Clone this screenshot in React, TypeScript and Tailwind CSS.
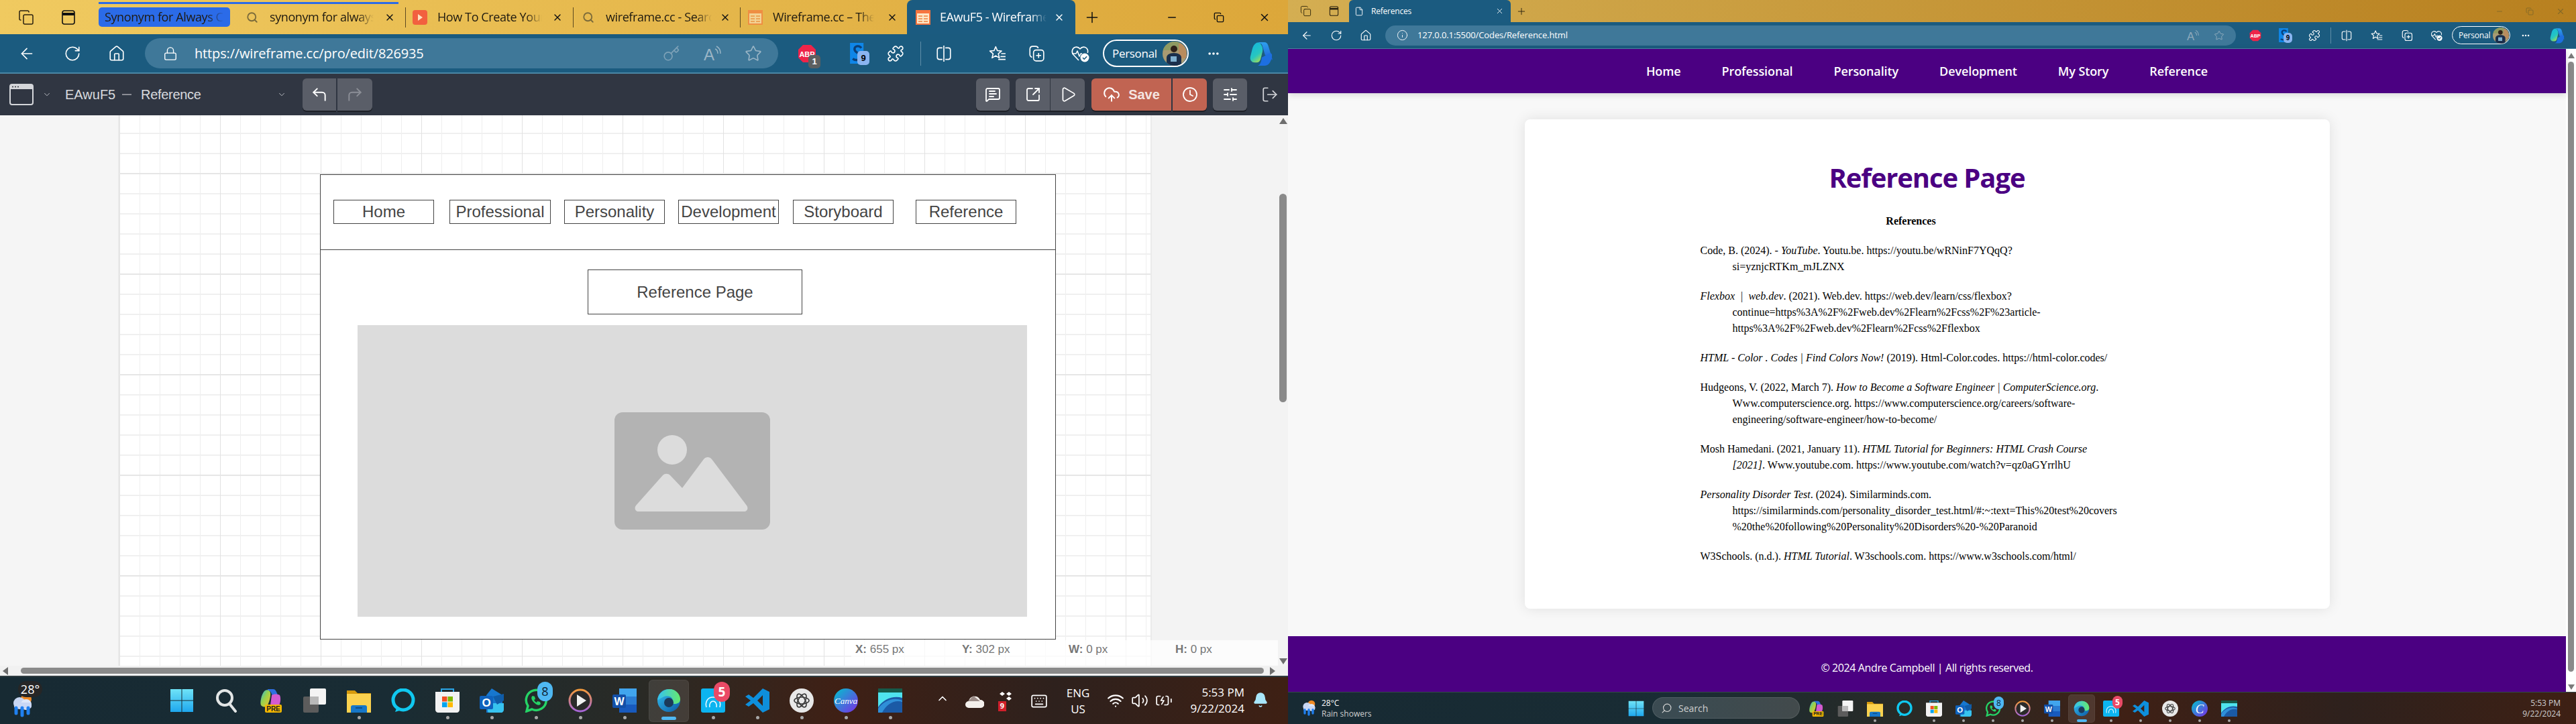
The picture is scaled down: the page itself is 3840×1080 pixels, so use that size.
import React from "react";
import {
  ArrowLeft, RotateCw, Home, Lock, Info, Star, Puzzle, Plus, X, Minus, Search,
  Wifi, Volume2, BatteryCharging, Bell, ChevronUp, ChevronDown, Keyboard, Key, MessageSquareText,
  SquareArrowOutUpRight, Play, CloudUpload, Clock, SlidersHorizontal, LogOut, CornerUpLeft, CornerUpRight,
  Copy, File, Ellipsis,
} from "lucide-react";

const sans = "font-['Open_Sans','Noto_Sans',sans-serif]";

type IP = { s: number; className?: string; c?: string };

function SplitIcon({ s, className, c = "#fff" }: IP) {
  return (
    <svg className={className} width={s} height={s} viewBox="0 0 24 24" fill="none" stroke={c} strokeWidth="1.5">
      <path d="M10 4H6a3 3 0 00-3 3v10a3 3 0 003 3h4M14 4h4a3 3 0 013 3v10a3 3 0 01-3 3h-4M12 1v22" />
    </svg>
  );
}

function FavIcon({ s, className, c = "#fff" }: IP) {
  return (
    <svg className={className} width={s} height={s} viewBox="0 0 24 24" fill="none" stroke={c} strokeWidth="1.5" strokeLinejoin="round">
      <path d="M9.500 2.500l2.300 5.400 5.700.5-4.400 3.800 1.400 5.700-5-3-5 3 1.400-5.700L1.500 8.400l5.700-.5z" />
      <path d="M17 12h6M16 16h7M13 20h10" />
    </svg>
  );
}

function CollIcon({ s, className, c = "#fff" }: IP) {
  return (
    <svg className={className} width={s} height={s} viewBox="0 0 24 24" fill="none" stroke={c} strokeWidth="1.5" strokeLinejoin="round">
      <path d="M6 17c-2-.5-3-2-3-4V6c0-2.500 1.500-4 4-4h4c1.500 0 3 1 3.500 2.500" />
      <rect x="8" y="7" width="14" height="15" rx="3.500" />
      <path d="M15 11v7M11.500 14.500h7" />
    </svg>
  );
}

function HealthIcon({ s, className, c = "#fff" }: IP) {
  return (
    <svg className={className} width={s} height={s} viewBox="0 0 28 28" fill="none" stroke={c} strokeWidth="1.600" strokeLinejoin="round">
      <path d="M12 24L4 15.500C1 12 2 6 6.500 4.500c3-1 5.500 0 7.500 2.500 2-2.500 4.500-3.500 7.500-2.500 3.500 1.200 5 5 3.800 8.500" />
      <path d="M2 14h6l2-4 3 8 2-4h2" />
      <circle cx="21" cy="20" r="6.500" fill={c} stroke="none" />
      <path d="M18 20l2.200 2.200 4-4" stroke="#1b5b7f" strokeWidth="1.600" />
    </svg>
  );
}

function ReadAloud({ s, className, c }: IP) {
  return (
    <svg className={className} width={s} height={s} viewBox="0 0 26 26" fill="none">
      <text x="0" y="23" fontSize="24" fill={c} fontFamily="Liberation Sans">A</text>
      <path d="M17 6c3 1 4 4 4 7M19 2c4 2 6 6 6 11" stroke={c} strokeWidth="1.500" />
    </svg>
  );
}

function VerticalTabs({ s, c }: { s: number; c: string }) {
  return (
    <svg width={s} height={s} viewBox="0 0 22 22" fill="none" stroke={c} strokeWidth="1.6">
      <rect x="2" y="1" width="18" height="20" rx="3" />
      <path d="M2 6h18" strokeWidth="4" />
    </svg>
  );
}

function PageFav({ s }: { s: number }) {
  return (
    <svg width={s} height={s} viewBox="0 0 24 24">
      <rect x="1" y="1" width="22" height="22" fill="#f7753f" />
      <rect x="3" y="6" width="18" height="15" fill="#fde7c8" />
      <path d="M5 9h6v2H5zM5 13h6v2H5zM5 17h6v2H5zM13 9h6v2h-6zM13 13h6v2h-6zM13 17h6v2h-6z" fill="#f29a5f" />
    </svg>
  );
}

function Abp({ s, badge }: { s: number; badge?: string }) {
  return (
    <div className="relative shrink-0" style={{ width: s, height: s }}>
      <svg width={s} height={s} viewBox="0 0 28 28">
        <path d="M8 1h12l7 7v12l-7 7H8l-7-7V8z" fill="#ee2449" />
        <text x="14" y="18.500" fontSize="11" fontWeight="700" fill="#fff" textAnchor="middle" fontFamily="Liberation Sans">ABP</text>
      </svg>
      {badge && (
        <span className="absolute right-[-6px] bottom-[-8px] w-[18px] h-[20px] rounded-[5px] bg-[#5c5f60] text-white text-[13px] font-bold flex items-center justify-center font-['Liberation_Sans',sans-serif]">{badge}</span>
      )}
    </div>
  );
}

function SExt({ s, small }: { s: number; small?: boolean }) {
  return (
    <div className="relative shrink-0" style={{ width: s, height: s * 1.45 }}>
      <svg width={s} height={s * 1.45} viewBox="0 0 26 38">
        <rect x="0" y="0" width="24" height="38" fill="#0f86e8" />
        <path d="M20 9c-3-5-12-4-12 2 0 7 10 6 10 14 0 6-9 7-13 3" fill="none" stroke="#0b3f78" strokeWidth="4" />
      </svg>
      <span className={(small ? "w-[13px] h-[15px] text-[10px] right-[-5px] bottom-[-1px] " : "w-[18px] h-[21px] text-[13px] right-[-7px] bottom-[-2px] ") + "absolute rounded-[5px] bg-[#8ab4f0] text-black font-bold flex items-center justify-center font-['Liberation_Sans',sans-serif]"}>9</span>
    </div>
  );
}

function CopilotLogo({ s }: { s: number }) {
  return (
    <svg width={s} height={s} viewBox="0 0 38 40">
      <defs>
        <linearGradient id="cpa" x1="0" y1="0" x2="0.5" y2="1">
          <stop offset="0" stopColor="#11b5e0" />
          <stop offset="0.7" stopColor="#27c6c0" />
          <stop offset="1" stopColor="#8ad86a" />
        </linearGradient>
        <linearGradient id="cpb" x1="0" y1="0" x2="0" y2="1">
          <stop offset="0" stopColor="#2ea0ee" />
          <stop offset="1" stopColor="#1f5fd6" />
        </linearGradient>
      </defs>
      <path d="M14 2h10c3 0 5 2 6 5l7 23-12-8-4-14c-1-3-2-4-4-4z" fill="url(#cpb)" />
      <path d="M12 3c-4 2-6 6-7 10L2 25c-1 5 2 9 7 9h3c3 0 5-2 6-5l3-12c1-4 0-8-2-11-1-2-4-4-7-3z" fill="url(#cpa)" />
      <path d="M20 26l11-6c3-2 5 0 5 3 0 6-4 16-11 16H12c5 0 7-5 8-13z" fill="#1d6fe0" />
    </svg>
  );
}

function Avatar({ s }: { s: number }) {
  return (
    <svg width={s} height={s} viewBox="0 0 36 36" className="shrink-0 rounded-full">
      <rect width="36" height="36" fill="#a99a72" />
      <rect y="0" width="36" height="13" fill="#8e9a62" />
      <rect x="24" y="3" width="12" height="22" fill="#b88c5e" />
      <circle cx="17" cy="11" r="5" fill="#2f2118" />
      <path d="M6 36V24c0-4 4-7 11-7s11 3 11 7v12z" fill="#1b2f4c" />
      <rect x="12" y="22" width="9" height="8" fill="#7fb0d0" />
    </svg>
  );
}

function PersonalPill({ big }: { big?: boolean }) {
  return big ? (
    <div className="ml-[20px] w-[128px] h-[41px] rounded-full border-2 border-white flex items-center justify-between pl-[12px] pr-[1px] shrink-0">
      <span className={sans + " text-[17px] tracking-[-0.3px] text-white"}>Personal</span>
      <Avatar s={36} />
    </div>
  ) : (
    <div className="ml-[14px] w-[87px] h-[27px] rounded-full border border-white flex items-center justify-between pl-[9px] pr-[1px] shrink-0">
      <span className={sans + " text-[12px] tracking-[-0.2px] text-white"}>Personal</span>
      <Avatar s={24} />
    </div>
  );
}

function TabText({ w, children, light }: { w: string; children: React.ReactNode; light?: boolean }) {
  return (
    <span className={w + " " + sans + " overflow-hidden whitespace-nowrap text-[18px] tracking-[-0.4px] [mask-image:linear-gradient(90deg,#000_85%,transparent)] " + (light ? "text-white" : "text-[#1f1a10]")}>
      {children}
    </span>
  );
}

function LeftTabs() {
  const d = "#2b2210";
  return (
    <div className="relative h-[51px] flex items-center bg-[linear-gradient(90deg,#f0ca60,#dca73a)]">
      <div className="absolute top-[3px] left-[147px] w-[447px] h-[3px] bg-[#2b6be8]" />
      <Copy className="ml-[27px] shrink-0" size={24} color={d} strokeWidth={1.5} />
      <div className="ml-[40px] shrink-0"><VerticalTabs s={22} c="#111" /></div>
      <div className="ml-[34px] w-[196px] h-[29px] shrink-0 rounded-[5px] bg-[#2b6be8] flex items-center px-[9px] overflow-hidden">
        <TabText w="w-[180px]">Synonym for Always C</TabText>
      </div>
      <Search className="ml-[24px] shrink-0" size={18} color="#7a6a3a" strokeWidth={2.4} />
      <span className="ml-[17px] flex shrink-0"><TabText w="w-[155px]">synonym for always</TabText></span>
      <X className="ml-[16px] shrink-0" size={16} color="#111" strokeWidth={2} />
      <div className="ml-[15px] w-px h-[30px] bg-[#5c4a20] shrink-0" />
      <svg className="ml-[10px] shrink-0" width="22" height="22" viewBox="0 0 22 22"><rect width="22" height="22" rx="4" fill="#f2603f" /><path d="M8 6l7 5-7 5z" fill="#fde2c0" /></svg>
      <span className="ml-[15px] flex shrink-0"><TabText w="w-[156px]">How To Create Your</TabText></span>
      <X className="ml-[15px] shrink-0" size={16} color="#111" strokeWidth={2} />
      <div className="ml-[15px] w-px h-[30px] bg-[#5c4a20] shrink-0" />
      <Search className="ml-[13px] shrink-0" size={18} color="#7a6a3a" strokeWidth={2.4} />
      <span className="ml-[17px] flex shrink-0"><TabText w="w-[158px]">wireframe.cc - Searc</TabText></span>
      <X className="ml-[12px] shrink-0" size={16} color="#111" strokeWidth={2} />
      <div className="ml-[14px] w-px h-[30px] bg-[#5c4a20] shrink-0" />
      <div className="ml-[10px] shrink-0 opacity-60"><PageFav s={24} /></div>
      <span className="ml-[14px] flex shrink-0"><TabText w="w-[151px]">Wireframe.cc – The C</TabText></span>
      <X className="ml-[19px] shrink-0" size={16} color="#111" strokeWidth={2} />
      <div className="ml-[14px] w-[251px] self-stretch shrink-0 rounded-t-[8px] bg-[#1b5b80] flex items-center">
        <div className="ml-[12px] shrink-0"><PageFav s={24} /></div>
        <span className="ml-[13px] flex shrink-0"><TabText w="w-[159px]" light>EAwuF5 - Wireframe</TabText></span>
        <X className="ml-[11px] shrink-0" size={16} color="#fff" strokeWidth={2} />
      </div>
      <Plus className="ml-[12px] shrink-0" size={26} color="#111" strokeWidth={1.4} />
      <Minus className="ml-[97px] shrink-0" size={18} color="#111" strokeWidth={2} />
      <Copy className="ml-[53px] shrink-0" size={16} color="#111" strokeWidth={2} />
      <X className="ml-[51px] shrink-0" size={18} color="#111" strokeWidth={2} />
    </div>
  );
}

function LeftToolbar() {
  const s = 1.5;
  return (
    <>
      <div className="h-[57px] flex items-center bg-[#1b5b7f]">
        <ArrowLeft className="ml-[27px] shrink-0" size={26} color="#fff" strokeWidth={s} />
        <RotateCw className="ml-[42px] shrink-0" size={26} color="#fff" strokeWidth={s} />
        <Home className="ml-[40px] shrink-0" size={26} color="#fff" strokeWidth={s} />
        <div className="ml-[29px] w-[944px] h-[45px] shrink-0 rounded-full bg-[#3f7899] flex items-center">
          <Lock className="ml-[27px] shrink-0" size={22} color="#fff" strokeWidth={s} />
          <span className={sans + " ml-[25px] text-[20px] tracking-[-0.15px] text-white"}>https://wireframe.cc/pro/edit/826935</span>
          <div className="ml-auto pr-[24px] flex gap-[35px] items-center">
            <Key size={26} color="#7ea2b8" strokeWidth={s} />
            <ReadAloud s={26} c="#9ab5c6" />
            <Star size={26} color="#9ab5c6" strokeWidth={s} />
          </div>
        </div>
        <div className="ml-[29px] shrink-0"><Abp s={28} badge="1" /></div>
        <div className="ml-[50px] shrink-0 w-[26px]"><SExt s={22} /></div>
        <Puzzle className="ml-[29px] shrink-0" size={26} color="#fff" strokeWidth={s} />
        <div className="ml-[24px] w-px h-[36px] bg-[#5f8ea8] shrink-0" />
        <SplitIcon className="ml-[21px] shrink-0" s={26} />
        <FavIcon className="ml-[54px] shrink-0" s={26} />
        <CollIcon className="ml-[32px] shrink-0" s={26} />
        <HealthIcon className="ml-[38px] shrink-0" s={28} />
        <PersonalPill big />
        <Ellipsis className="ml-[27px] shrink-0" size={20} color="#fff" strokeWidth={2.4} />
        <div className="ml-[42px] shrink-0"><CopilotLogo s={38} /></div>
      </div>
      <div className="h-[2px] bg-[#4a87a4]" />
    </>
  );
}

function AppToolbar() {
  const btn = "h-[48px] bg-[#5a5e68] shadow-[0_2px_0_#1d2027] flex items-center justify-center shrink-0";
  return (
    <div className="h-[62px] flex items-center bg-[#303642] font-['Liberation_Sans',sans-serif]">
      <svg className="ml-[14px] shrink-0" width="36" height="32" viewBox="0 0 36 32" fill="none">
        <rect x="1" y="1" width="34" height="30" rx="3" stroke="#d4d6da" strokeWidth="2" />
        <path d="M1 8V4a3 3 0 013-3h28a3 3 0 013 3v4z" fill="#d4d6da" />
        <path d="M4 4.500h2M8 4.500h2M12 4.500h2" stroke="#30363f" strokeWidth="1.600" />
      </svg>
      <ChevronDown className="ml-[13px] shrink-0" size={14} color="#c8cad0" strokeWidth={1.5} />
      <span className="ml-[20px] w-[74px] text-[20px] text-[#d8dade] whitespace-nowrap">EAwuF5</span>
      <div className="ml-[11px] w-[14px] h-[2px] bg-[#8a8d95] shrink-0" />
      <span className="ml-[14px] w-[90px] text-[20px] tracking-[-0.3px] text-[#d8dade] whitespace-nowrap">Reference</span>
      <ChevronDown className="ml-[113px] shrink-0" size={14} color="#c8cad0" strokeWidth={1.5} />
      <div className={btn + " ml-[24px] w-[50px] rounded-l-[6px]"}><CornerUpLeft size={26} color="#fff" strokeWidth={1.8} /></div>
      <div className={btn + " ml-[2px] w-[52px] rounded-r-[6px]"}><CornerUpRight size={26} color="#8b8e96" strokeWidth={1.8} /></div>
      <div className={btn + " ml-[900px] w-[50px] rounded-[6px]"}><MessageSquareText size={24} color="#fff" strokeWidth={1.8} /></div>
      <div className={btn + " ml-[9px] w-[52px] rounded-l-[6px] border-r border-[#30363f]"}><SquareArrowOutUpRight size={24} color="#fff" strokeWidth={1.8} /></div>
      <div className={btn + " w-[51px] rounded-r-[6px]"}><Play size={26} color="#fff" strokeWidth={1.6} /></div>
      <div className={btn + " ml-[10px] w-[119px] rounded-l-[6px] !bg-[#c16452] gap-[12px]"}>
        <CloudUpload size={26} color="#fff" strokeWidth={1.8} />
        <span className="text-[20px] font-bold text-[#f4e4e0]">Save</span>
      </div>
      <div className={btn + " ml-[2px] w-[51px] rounded-r-[6px] !bg-[#c16452]"}><Clock size={24} color="#fff" strokeWidth={1.8} /></div>
      <div className={btn + " ml-[9px] w-[51px] rounded-[6px]"}><SlidersHorizontal size={24} color="#fff" strokeWidth={1.8} /></div>
      <LogOut className="ml-[21px] shrink-0" size={26} color="#d4d6da" strokeWidth={1.6} />
    </div>
  );
}

function Wire({ w, children, className = "" }: { w: string; children: React.ReactNode; className?: string }) {
  return (
    <div className={w + " h-[36px] shrink-0 border border-[#444] flex items-center justify-center text-[24px] text-[#444] " + className}>{children}</div>
  );
}

function Canvas() {
  return (
    <div className="relative h-[821px] flex bg-[#f5f5f5]">
      <div className="w-[178px] shrink-0 border-r-2 border-[#eaeaea]" />
      <div className="w-[1537px] shrink-0 overflow-hidden bg-white bg-[linear-gradient(#e6e6e6_2px,transparent_2px),linear-gradient(90deg,#e2e2e2_1px,transparent_1px),linear-gradient(#f0f0f0_2px,transparent_2px),linear-gradient(90deg,#eeeeee_1px,transparent_1px)] bg-[size:150px_150px,150px_150px,30px_30px,30px_30px] [background-position:0_86px,0_0,0_26px,0_0] pt-[88px] pl-[299px] font-['Liberation_Sans',sans-serif]">
        <div className="w-[1097px] h-[694px] border border-[#444] bg-white">
          <div className="h-[112px] border-b border-[#444] flex items-center pb-[1px] pl-[19px]">
            <Wire w="w-[150px]">Home</Wire>
            <Wire w="w-[151px]" className="ml-[23px]">Professional</Wire>
            <Wire w="w-[150px]" className="ml-[20px]">Personality</Wire>
            <Wire w="w-[150px]" className="ml-[20px]">Development</Wire>
            <Wire w="w-[150px]" className="ml-[21px]">Storyboard</Wire>
            <Wire w="w-[150px]" className="ml-[33px]">Reference</Wire>
          </div>
          <div className="ml-[398px] mt-[29px] w-[320px] h-[67px] border border-[#444] flex items-center justify-center text-[24px] text-[#444]">Reference Page</div>
          <div className="ml-[55px] mt-[16px] w-[998px] h-[435px] bg-[#dcdcdc] flex items-center justify-center">
            <svg width="232" height="175" viewBox="0 0 232 175">
              <rect width="232" height="175" rx="12" fill="#b3b3b3" />
              <circle cx="86" cy="56" r="22" fill="#dcdcdc" />
              <path d="M36 148c-5 0-7-5-4-9l40-45c3-3 8-3 11 0l18 19 32-43c3-4 9-4 12 0l52 69c3 4 1 9-4 9z" fill="#dcdcdc" />
            </svg>
          </div>
        </div>
      </div>
      <div className="w-[190px] shrink-0 bg-[#f3f3f3] border-l-2 border-[#eaeaea]" />
      <div className="w-[15px] shrink-0 bg-[#f3f3f3] flex flex-col items-center">
        <div className="mt-[4px] w-0 h-0 border-x-[6px] border-x-transparent border-b-[9px] border-b-[#6e6e6e]" />
        <div className="mt-[104px] w-[11px] h-[311px] rounded-full bg-[#8a8a8a]" />
        <div className="mt-auto mb-[2px] w-0 h-0 border-x-[6px] border-x-transparent border-t-[9px] border-t-[#6e6e6e]" />
      </div>
      <div className="absolute left-[1269px] right-[15px] bottom-0 h-[38px] pb-[10px] bg-white/70 flex items-center text-[17px] text-[#777] font-['Liberation_Sans',sans-serif]">
        <span className="ml-[6px] w-[159px] whitespace-nowrap"><b>X:</b> 655 px</span>
        <span className="w-[159px] whitespace-nowrap"><b>Y:</b> 302 px</span>
        <span className="w-[159px] whitespace-nowrap"><b>W:</b> 0 px</span>
        <span className="whitespace-nowrap"><b>H:</b> 0 px</span>
      </div>
    </div>
  );
}

function TIcon({ k, s }: { k: string; s: number }) {
  switch (k) {
    case "win":
      return (
        <svg width={s} height={s} viewBox="0 0 36 36">
          <defs><linearGradient id="wg" x1="0" y1="0" x2="0" y2="1"><stop offset="0" stopColor="#6fe3f7" /><stop offset="1" stopColor="#1ea7ee" /></linearGradient></defs>
          <path d="M1 1h16.500v16.500H1zM18.500 1H35v16.500H18.500zM1 18.500h16.500V35H1zM18.500 18.500H35V35H18.500z" fill="url(#wg)" />
        </svg>
      );
    case "search":
      return (
        <svg width={s} height={s} viewBox="0 0 36 36" fill="none" stroke="#e3e6e6" strokeWidth="4">
          <circle cx="16" cy="14" r="11" /><path d="M24 24l8 10" strokeLinecap="round" />
        </svg>
      );
    case "copilot":
      return (
        <svg width={s} height={s} viewBox="0 0 36 36">
          <defs><linearGradient id="tcp" x1="0" y1="0" x2="1" y2="1"><stop offset="0" stopColor="#26b7e8" /><stop offset=".45" stopColor="#9ad14a" /><stop offset="1" stopColor="#f2c230" /></linearGradient></defs>
          <path d="M14 1h8c3 0 4 2 5 4l4 9-9-1-3-7c-1-2-3-3-5-2z" fill="#2f6fe0" />
          <path d="M9 4c3-3 8-2 9 2 1 5-2 16-5 20-2 2-7 2-9-1-2-4 1-17 5-21z" fill="url(#tcp)" />
          <path d="M20 10c3-2 9-2 12 0 2 4 1 12-1 15H18z" fill="#d45bd0" />
          <rect x="10" y="24" width="25" height="12" rx="2" fill="#f5b800" />
          <text x="22.500" y="33.500" fontSize="10" fontWeight="700" textAnchor="middle" fill="#222" fontFamily="Liberation Sans">PRE</text>
        </svg>
      );
    case "task":
      return (
        <svg width={s} height={s} viewBox="0 0 36 36">
          <rect x="1" y="12" width="23" height="24" rx="2" fill="#5c5c5c" />
          <rect x="11" y="0" width="24" height="24" rx="2" fill="#f4f4f4" />
          <rect x="11" y="12" width="13" height="12" fill="#b9b9b9" />
        </svg>
      );
    case "folder":
      return (
        <svg width={s} height={s} viewBox="0 0 36 36">
          <path d="M0 3h12l4 4h20v29H0z" fill="#d69a0c" />
          <rect y="8" width="36" height="28" fill="#fbd24f" />
          <path d="M6 36v-8c0-2 1-3 3-3h18c2 0 3 1 3 3v8z" fill="#1677c8" />
          <rect x="13" y="28" width="10" height="2" fill="#0c4e8a" />
        </svg>
      );
    case "alexa":
      return (
        <svg width={s} height={s} viewBox="0 0 36 36" fill="none">
          <ellipse cx="18" cy="17" rx="15" ry="15" stroke="#10c8f0" strokeWidth="5" />
          <path d="M9 27l-3 8 10-3z" fill="#10c8f0" />
        </svg>
      );
    case "store":
      return (
        <svg width={s} height={s} viewBox="0 0 36 36">
          <path d="M9 5V1h18v4" fill="none" stroke="#2aa6e8" strokeWidth="2" />
          <path d="M0 5h36v27c0 2-2 4-4 4H4c-2 0-4-2-4-4z" fill="#f2f2f2" />
          <rect x="10" y="12" width="7.500" height="7.500" fill="#f25022" />
          <rect x="18.500" y="12" width="7.500" height="7.500" fill="#7fba00" />
          <rect x="10" y="20.500" width="7.500" height="7.500" fill="#00a4ef" />
          <rect x="18.500" y="20.500" width="7.500" height="7.500" fill="#ffb900" />
        </svg>
      );
    case "outlook":
      return (
        <svg width={s} height={s} viewBox="0 0 36 36">
          <path d="M18 0l16 10v26H10V10z" fill="#1777cf" />
          <path d="M12 22h24v10c0 2-2 4-4 4H14c-2 0-2-2-2-4z" fill="#37c3ef" />
          <path d="M20 12l16-4v10l-10 6z" fill="#0f5ca8" />
          <rect x="0" y="11" width="20" height="20" rx="2" fill="#0f62bd" />
          <text x="10" y="27" fontSize="17" fontWeight="700" fill="#fff" textAnchor="middle" fontFamily="Liberation Sans">O</text>
        </svg>
      );
    case "wa":
      return (
        <div className="relative" style={{ width: s, height: s }}>
          <svg width={s} height={s} viewBox="0 0 36 36" fill="none">
            <path d="M4 34l2-8A15 15 0 1 1 12 31z" stroke="#25d366" strokeWidth="3.500" />
            <path d="M13 11c-3 2-2 6 2 10s8 5 10 2l-1-3-4-1-1 2c-2-1-3-2-4-4l2-1-1-4z" fill="#25d366" />
          </svg>
          <span className={(s > 30 ? "w-[23px] h-[29px] text-[18px] right-[-7px] top-[-10px]" : "w-[15px] h-[19px] text-[12px] right-[-4px] top-[-6px]") + " absolute rounded-full bg-[#4fb8f2] text-[#0d2230] flex items-center justify-center " + sans}>8</span>
        </div>
      );
    case "play":
      return (
        <svg width={s} height={s} viewBox="0 0 36 36">
          <defs><linearGradient id="pg" x1="0" y1="0" x2="0" y2="1"><stop offset="0" stopColor="#f39a3c" /><stop offset="1" stopColor="#a565d8" /></linearGradient></defs>
          <circle cx="18" cy="18" r="16" fill="#2a2a2a" stroke="url(#pg)" strokeWidth="3" />
          <path d="M13 9l14 9-14 9z" fill="#f2f2f2" />
        </svg>
      );
    case "word":
      return (
        <svg width={s} height={s} viewBox="0 0 36 36">
          <path d="M10 0h26v12H10z" fill="#41a5ee" />
          <path d="M10 12h26v12H10z" fill="#2b7cd3" />
          <path d="M10 24h26v12H10z" fill="#185abd" />
          <rect y="9" width="20" height="20" rx="2" fill="#1350a8" />
          <text x="10" y="25" fontSize="16" fontWeight="700" fill="#fff" textAnchor="middle" fontFamily="Liberation Sans">W</text>
        </svg>
      );
    case "edge":
      return (
        <svg width={s} height={s} viewBox="0 0 36 36">
          <defs>
            <linearGradient id="eg" x1="0" y1="0" x2="1" y2="1"><stop offset="0" stopColor="#35c1f1" /><stop offset="1" stopColor="#0c59a4" /></linearGradient>
            <linearGradient id="eg2" x1="0" y1="0" x2="1" y2="0"><stop offset="0" stopColor="#35c1f1" /><stop offset="1" stopColor="#66eb6e" /></linearGradient>
          </defs>
          <circle cx="18" cy="18" r="17" fill="url(#eg)" />
          <path d="M1 17C3 6 12 1 19 1c10 0 16 8 16 15 0 5-4 7-8 7-3 0-6-1-6-3 2-1 3-3 2-5-2-4-9-5-14-2-4 2-7 4-8 4z" fill="url(#eg2)" />
          <circle cx="18" cy="21" r="7" fill="#1c3a5a" />
        </svg>
      );
    case "cap":
      return (
        <div className="relative" style={{ width: s, height: s }}>
          <svg width={s} height={s} viewBox="0 0 36 36" fill="none">
            <rect width="36" height="36" rx="3" fill="#0cb4f0" />
            <path d="M8 28c-2-7 1-15 10-15s12 8 10 15M13 28c-1-4 1-9 5-9s6 5 5 9" stroke="#e8f8ff" strokeWidth="1.600" />
          </svg>
          <span className={(s > 30 ? "w-[24px] h-[30px] text-[19px] right-[-7px] top-[-10px]" : "w-[15px] h-[19px] text-[12px] right-[-5px] top-[-7px]") + " absolute rounded-full bg-[#ea4a66] text-white font-bold flex items-center justify-center " + sans}>5</span>
        </div>
      );
    case "vs":
      return (
        <svg width={s} height={s} viewBox="0 0 36 36">
          <path d="M26 0l10 5v26l-10 5-14-14-7 5-5-3 8-6-8-6 5-3 7 5zM26 10l-8 8 8 8z" fill="#0e8fdc" />
        </svg>
      );
    case "gpt":
      return (
        <svg width={s} height={s} viewBox="0 0 36 36" fill="none">
          <circle cx="18" cy="18" r="18" fill="#e8e8e8" />
          <g stroke="#3a3a3a" strokeWidth="1.600">
            <ellipse cx="18" cy="18" rx="11" ry="5" />
            <ellipse cx="18" cy="18" rx="11" ry="5" transform="rotate(60 18 18)" />
            <ellipse cx="18" cy="18" rx="11" ry="5" transform="rotate(120 18 18)" />
          </g>
        </svg>
      );
    case "canva":
      return (
        <svg width={s} height={s} viewBox="0 0 36 36">
          <defs><linearGradient id="cg" x1="0" y1="0" x2="1" y2="1"><stop offset="0" stopColor="#00c4cc" /><stop offset="1" stopColor="#7d2ae8" /></linearGradient></defs>
          <circle cx="18" cy="18" r="18" fill="url(#cg)" />
          {s > 30 ? (
            <text x="18" y="23" fontSize="13" fontStyle="italic" fill="#fff" textAnchor="middle" fontFamily="Liberation Serif">Canva</text>
          ) : (
            <text x="18" y="28" fontSize="28" fontStyle="italic" fill="#fff" textAnchor="middle" fontFamily="Liberation Serif">C</text>
          )}
        </svg>
      );
    default:
      return (
        <svg width={s} height={s} viewBox="0 0 36 36">
          <rect width="36" height="36" fill="#1b5aa6" />
          <rect width="36" height="6" fill="#165a4a" />
          <path d="M0 6h36v8C22 10 8 16 0 28z" fill="#4fe3ee" />
          <path d="M0 30C8 18 24 12 36 18v2C24 16 12 24 6 36H0z" fill="#2f8fd8" />
        </svg>
      );
  }
}

const dotted: Record<string, boolean> = { folder: true, store: true, outlook: true, wa: true, play: true, word: true, cap: true, vs: true, gpt: true, canva: true, last: true };
const keysLeft = ["win", "search", "copilot", "task", "folder", "alexa", "store", "outlook", "wa", "play", "word", "edge", "cap", "vs", "gpt", "canva", "last"];
const keysRight = ["copilot", "task", "folder", "alexa", "store", "outlook", "wa", "play", "word", "edge", "cap", "vs", "gpt", "canva", "last"];

function Slot({ k, big }: { k: string; big: boolean }) {
  const active = k === "edge";
  return big ? (
    <div className="relative w-[66px] h-[70px] shrink-0 flex flex-col items-center pt-[17px]">
      {active && <div className="absolute left-[3px] right-[3px] top-[4px] bottom-[3px] rounded-[6px] bg-white/10 border border-white/5" />}
      <div className="relative"><TIcon k={k} s={36} /></div>
      {dotted[k] && <div className="mt-[5px] w-[5px] h-[5px] rounded-full bg-[#a8a8a8]" />}
      {active && <div className="relative mt-[6px] w-[22px] h-[5px] rounded-full bg-[#4fb8f2]" />}
    </div>
  ) : (
    <div className="relative w-[44px] h-[47px] shrink-0 flex flex-col items-center pt-[12px]">
      {active && <div className="absolute left-[2px] right-[2px] top-[3px] bottom-[2px] rounded-[5px] bg-white/10 border border-white/5" />}
      <div className="relative"><TIcon k={k} s={24} /></div>
      {dotted[k] && <div className="mt-[4px] w-[4px] h-[4px] rounded-full bg-[#a8a8a8]" />}
      {active && <div className="relative mt-[4px] w-[15px] h-[4px] rounded-full bg-[#4fb8f2]" />}
    </div>
  );
}

function Weather({ s }: { s: number }) {
  return (
    <svg width={s} height={s} viewBox="0 0 36 36" className="shrink-0">
      <circle cx="24" cy="9" r="8" fill="#f08a24" />
      <circle cx="14" cy="15" r="9" fill="#c8d6f2" />
      <circle cx="24" cy="17" r="8" fill="#dfe8fa" />
      <rect x="6" y="14" width="26" height="9" rx="4" fill="#c9d7f5" />
      <path d="M9 22v8M18 22v11M27 22v8" stroke="#2080f0" strokeWidth="5" strokeLinecap="round" />
    </svg>
  );
}

const taskbarBg = "bg-[linear-gradient(90deg,#172a33_0%,#192c34_30%,#2a2a25_50%,#3f2015_65%,#2e211d_82%,#3e2014_100%)]";

function LeftTaskbar() {
  return (
    <div className={"relative h-[72px] flex items-start border-t-2 border-[#2f3c40] text-white " + taskbarBg + " " + sans}>
      <div className="relative w-[238px] h-full shrink-0">
        <div className="absolute left-[15px] top-[24px]"><Weather s={36} /></div>
        <div className="absolute left-[27px] top-[6px] w-[36px] h-[24px] rounded-full bg-[#262626] text-[18px] flex items-center justify-center">28°</div>
      </div>
      {keysLeft.map((k) => <Slot key={k} k={k} big />)}
      <ChevronUp className="ml-[35px] mt-[22px] shrink-0" size={20} color="#fff" strokeWidth={2} />
      <svg className="ml-[24px] mt-[24px] shrink-0" width="28" height="24" viewBox="0 0 28 24"><path d="M5 22a5 5 0 010-10 9 9 0 0117-2 6 6 0 011 12z" fill="#f4f0ec" /><path d="M12 4l10 8H4z" fill="#9b8c88" /></svg>
      <div className="ml-[21px] mt-[22px] w-[24px] h-[30px] shrink-0 relative">
        <svg width="24" height="16" viewBox="0 0 24 16"><path d="M6 0l4 3-4 3-4-3zM16 0l4 3-4 3-4-3zM16 7l4 3-4 3-4-3z" fill="#fff" /></svg>
        <span className="absolute left-0 top-[14px] w-[12px] h-[15px] bg-[#d01f2a] text-[11px] font-bold flex items-center justify-center">9</span>
      </div>
      <Keyboard className="ml-[24px] mt-[23px] shrink-0" size={26} color="#fff" strokeWidth={1.6} />
      <div className="ml-[20px] w-[50px] shrink-0 text-[17px] leading-[24px] mt-[12px] text-center">ENG<br />US</div>
      <Wifi className="ml-[18px] mt-[22px] shrink-0" size={26} color="#fff" strokeWidth={2} />
      <Volume2 className="ml-[10px] mt-[22px] shrink-0" size={26} color="#fff" strokeWidth={1.6} />
      <BatteryCharging className="ml-[10px] mt-[22px] shrink-0" size={26} color="#fff" strokeWidth={1.6} />
      <div className="ml-[7px] w-[100px] shrink-0 text-[17px] leading-[24px] mt-[11px] text-right whitespace-nowrap">5:53 PM<br />9/22/2024</div>
      <Bell className="ml-[12px] mt-[22px] shrink-0" size={24} color="#a8e6fa" fill="#a8e6fa" strokeWidth={1.5} />
    </div>
  );
}

function RightTaskbar() {
  return (
    <div className={"h-[48px] flex items-start border-t border-[#34494a] text-white " + taskbarBg + " " + sans}>
      <div className="ml-[19px] mt-[11px] shrink-0"><Weather s={24} /></div>
      <div className="ml-[7px] w-[100px] shrink-0 text-[12px] leading-[16px] mt-[8px] whitespace-nowrap">
        <div className="text-white">28°C</div>
        <div className="text-[#cfcfcf]">Rain showers</div>
      </div>
      <div className="ml-[357px] mt-[12px] shrink-0"><TIcon k="win" s={24} /></div>
      <div className="ml-[12px] mt-[7px] w-[220px] h-[32px] shrink-0 rounded-full bg-white/15 border border-white/10 flex items-center pl-[12px]">
        <Search size={17} color="#d8d8d8" strokeWidth={1.6} className="scale-x-[-1]" />
        <span className="ml-[9px] text-[14px] text-[#d0d0d0]">Search</span>
      </div>
      <div className="ml-[2px] flex">
        {keysRight.map((k) => <Slot key={k} k={k} big={false} />)}
      </div>
      <div className="ml-auto mr-[23px] mt-[8px] text-[12px] leading-[16px] text-right text-[#cfcfcf] whitespace-nowrap">5:53 PM<br />9/22/2024</div>
    </div>
  );
}

function RightTabs() {
  const dim = "#876a26";
  return (
    <div className="h-[33px] flex items-center bg-[linear-gradient(90deg,#d4ae52,#b8801f)]">
      <Copy className="ml-[18px] shrink-0" size={17} color="#3b3010" strokeWidth={1.4} />
      <div className="ml-[26px] shrink-0"><VerticalTabs s={15} c="#2b2210" /></div>
      <div className="ml-[15px] w-[241px] self-stretch shrink-0 rounded-t-[6px] bg-[#1b5b80] flex items-center">
        <File className="ml-[8px] shrink-0" size={14} color="#fff" strokeWidth={1.6} />
        <span className={sans + " ml-[11px] text-[12px] tracking-[-0.2px] text-white"}>References</span>
        <X className="ml-auto mr-[10px] shrink-0" size={13} color="#fff" strokeWidth={1.6} />
      </div>
      <Plus className="ml-[8px] shrink-0" size={16} color="#2b2210" strokeWidth={1.4} />
      <div className="ml-auto mr-[16px] flex items-center gap-[33px]">
        <Minus size={12} color={dim} strokeWidth={2} />
        <Copy size={12} color={dim} strokeWidth={2} />
        <X size={14} color={dim} strokeWidth={2} />
      </div>
    </div>
  );
}

function RightToolbar() {
  const s = 1.5;
  return (
    <>
      <div className="h-[39px] flex items-center bg-[#1b5b7f]">
        <ArrowLeft className="ml-[19px] shrink-0" size={18} color="#fff" strokeWidth={s} />
        <RotateCw className="ml-[26px] shrink-0" size={18} color="#fff" strokeWidth={s} />
        <Home className="ml-[26px] shrink-0" size={18} color="#fff" strokeWidth={s} />
        <div className="ml-[20px] w-[1268px] h-[30px] shrink-0 rounded-full bg-[#3f7899] flex items-center">
          <Info className="ml-[17px] shrink-0" size={17} color="#fff" strokeWidth={1.3} />
          <span className={sans + " ml-[14px] text-[13px] tracking-[-0.1px] text-white"}>127.0.0.1:5500/Codes/Reference.html</span>
          <div className="ml-auto pr-[17px] flex items-center gap-[22px]">
            <ReadAloud s={18} c="#8fabbd" />
            <Star size={16} color="#8fabbd" strokeWidth={s} />
          </div>
        </div>
        <div className="ml-[20px] shrink-0"><Abp s={18} /></div>
        <div className="ml-[26px] shrink-0 w-[18px]"><SExt s={15} small /></div>
        <Puzzle className="ml-[26px] shrink-0" size={18} color="#fff" strokeWidth={s} />
        <div className="ml-[15px] w-px h-[24px] bg-[#5f8ea8] shrink-0" />
        <SplitIcon className="ml-[14px] shrink-0" s={18} />
        <FavIcon className="ml-[27px] shrink-0" s={18} />
        <CollIcon className="ml-[27px] shrink-0" s={18} />
        <HealthIcon className="ml-[26px] shrink-0" s={18} />
        <PersonalPill />
        <Ellipsis className="ml-[16px] shrink-0" size={14} color="#fff" strokeWidth={2.4} />
        <div className="ml-[28px] shrink-0"><CopilotLogo s={24} /></div>
      </div>
      <div className="h-px bg-[#4a87a4]" />
    </>
  );
}

function Entry({ children }: { children: React.ReactNode }) {
  return <p className="pl-12 -indent-12 mb-[20px] leading-[24px] whitespace-nowrap">{children}</p>;
}

function RefPage() {
  return (
    <div className="h-[959px] flex">
      <div className="w-[1905px] shrink-0 flex flex-col bg-[#f8f8f8]">
        <nav className={"relative h-[66px] shrink-0 bg-[#4b0082] shadow-[0_2px_10px_rgba(0,0,0,0.15)] flex items-center justify-center gap-[61px] text-[18px] font-semibold text-white tracking-[-0.1px] " + sans}>
          <span>Home</span><span>Professional</span><span>Personality</span><span>Development</span><span>My Story</span><span>Reference</span>
        </nav>
        <div className="flex-1 pt-[39px]">
          <div className="mx-auto w-[1200px] h-[730px] bg-white rounded-[8px] shadow-[0_0_20px_rgba(0,0,0,0.1)] pt-[60px]">
            <h1 className={"text-center text-[40px] leading-[54px] font-bold text-[#4b0082] tracking-[-1.1px] " + sans}>Reference Page</h1>
            <div className="font-['Liberation_Serif',serif] text-[16px] text-black">
              <p className="mt-[26px] pr-[48px] text-center font-bold leading-[24px]">References</p>
              <div className="mt-[20px] ml-[262px]">
                <Entry>Code, B. (2024). - <i>YouTube</i>. Youtu.be. https://youtu.be/wRNinF7YQqQ?<br />si=yznjcRTKm_mJLZNX</Entry>
                <Entry><i>Flexbox &nbsp;|&nbsp; web.dev</i>. (2021). Web.dev. https://web.dev/learn/css/flexbox?<br />continue=https%3A%2F%2Fweb.dev%2Flearn%2Fcss%2F%23article-<br />https%3A%2F%2Fweb.dev%2Flearn%2Fcss%2Fflexbox</Entry>
                <Entry><i>HTML - Color . Codes | Find Colors Now!</i> (2019). Html-Color.codes. https://html-color.codes/</Entry>
                <Entry>Hudgeons, V. (2022, March 7). <i>How to Become a Software Engineer | ComputerScience.org</i>.<br />Www.computerscience.org. https://www.computerscience.org/careers/software-<br />engineering/software-engineer/how-to-become/</Entry>
                <Entry>Mosh Hamedani. (2021, January 11). <i>HTML Tutorial for Beginners: HTML Crash Course<br />[2021]</i>. Www.youtube.com. https://www.youtube.com/watch?v=qz0aGYrrlhU</Entry>
                <Entry><i>Personality Disorder Test</i>. (2024). Similarminds.com.<br />https://similarminds.com/personality_disorder_test.html/#:~:text=This%20test%20covers<br />%20the%20following%20Personality%20Disorders%20-%20Paranoid</Entry>
                <Entry>W3Schools. (n.d.). <i>HTML Tutorial</i>. W3schools.com. https://www.w3schools.com/html/</Entry>
              </div>
            </div>
          </div>
        </div>
        <footer className={"h-[83px] shrink-0 pt-[10px] bg-[#4b0082] flex items-center justify-center text-[16px] tracking-[-0.4px] text-white " + sans}>© 2024 Andre Campbell | All rights reserved.</footer>
      </div>
      <div className="w-[15px] shrink-0 bg-white flex flex-col items-center">
        <div className="mt-[6px] w-0 h-0 border-x-[5px] border-x-transparent border-b-[8px] border-b-[#7a7a7a]" />
        <div className="mt-[5px] w-[9px] h-[910px] rounded-full bg-[#8a8a8a]" />
        <div className="mt-auto mb-[3px] w-0 h-0 border-x-[5px] border-x-transparent border-t-[8px] border-t-[#7a7a7a]" />
      </div>
    </div>
  );
}

export default function App() {
  return (
    <div className="grid grid-cols-2 w-[3840px] h-[1080px] overflow-hidden">
      <div className="flex flex-col w-[1920px] h-[1080px] overflow-hidden">
        <LeftTabs />
        <LeftToolbar />
        <AppToolbar />
        <Canvas />
        <div className="h-[15px] bg-[#f1f1f1] flex items-center">
          <div className="ml-[4px] w-0 h-0 border-y-[6px] border-y-transparent border-r-[8px] border-r-[#6e6e6e]" />
          <div className="ml-[19px] w-[1853px] h-[9px] rounded-full bg-[#8a8a8a]" />
          <div className="ml-[9px] w-0 h-0 border-y-[6px] border-y-transparent border-l-[8px] border-l-[#6e6e6e]" />
        </div>
        <LeftTaskbar />
      </div>
      <div className="flex flex-col w-[1920px] h-[1080px] overflow-hidden">
        <RightTabs />
        <RightToolbar />
        <RefPage />
        <RightTaskbar />
      </div>
    </div>
  );
}
